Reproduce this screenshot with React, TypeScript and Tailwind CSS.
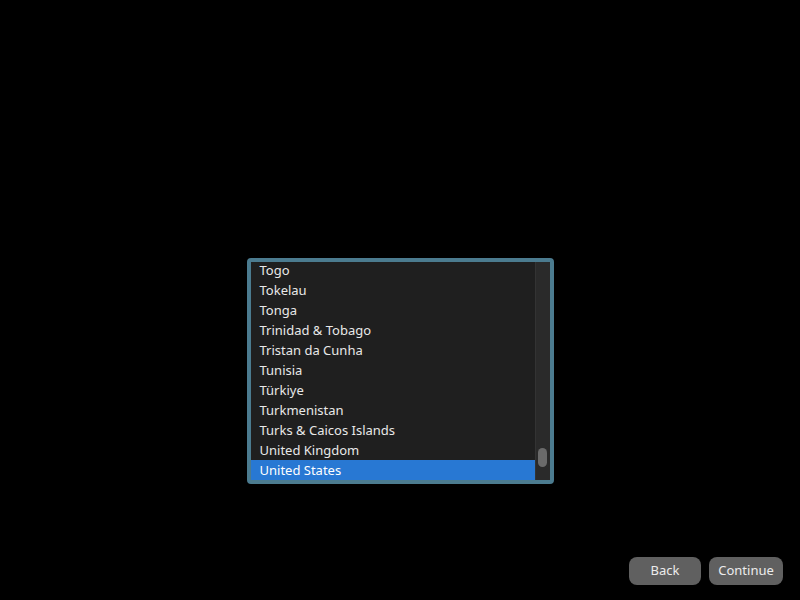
const countries = [
  "Togo",
  "Tokelau",
  "Tonga",
  "Trinidad & Tobago",
  "Tristan da Cunha",
  "Tunisia",
  "Türkiye",
  "Turkmenistan",
  "Turks & Caicos Islands",
  "United Kingdom",
  "United States",
];

const selected = "United States";

export default function App() {
  return (
    <div
      className="flex h-[600px] w-[800px] flex-col bg-black text-[13px] text-[#e8e8e8]"
      style={{ fontFamily: '"Noto Sans", "Open Sans", sans-serif' }}
    >
      <div className="flex flex-1 items-start justify-center pt-[258px]">
        <div className="flex h-[226px] w-[307px] rounded-[4px] border-[4px] border-[#4b7b8f] bg-[#1f1f1f]">
          <div className="flex-1 overflow-hidden">
            {/* list is scrolled to the end, so the first row sits 2px above the viewport */}
            <ul className="mt-[-2px]">
              {countries.map((c) => (
                <li
                  key={c}
                  className={`flex h-[20px] items-center pt-[2px] pl-[9px] ${
                    c === selected ? "bg-[#2878d3] text-white" : ""
                  }`}
                >
                  {c}
                </li>
              ))}
            </ul>
          </div>
          <div className="flex w-[15px] flex-col justify-end border-l border-[#333] bg-[#2a2a2a] pb-[13px] pl-[2px]">
            <div className="h-[19px] w-[9px] rounded-full bg-[#6a6a6a]" />
          </div>
        </div>
      </div>
      <div className="flex justify-end gap-[8px] pr-[17px] pb-[15px]">
        <button className="h-[28px] w-[72px] rounded-[8px] bg-[#606060] text-[13px] text-[#ececec]">
          Back
        </button>
        <button className="h-[28px] w-[74px] rounded-[8px] bg-[#606060] text-[13px] text-[#ececec]">
          Continue
        </button>
      </div>
    </div>
  );
}
